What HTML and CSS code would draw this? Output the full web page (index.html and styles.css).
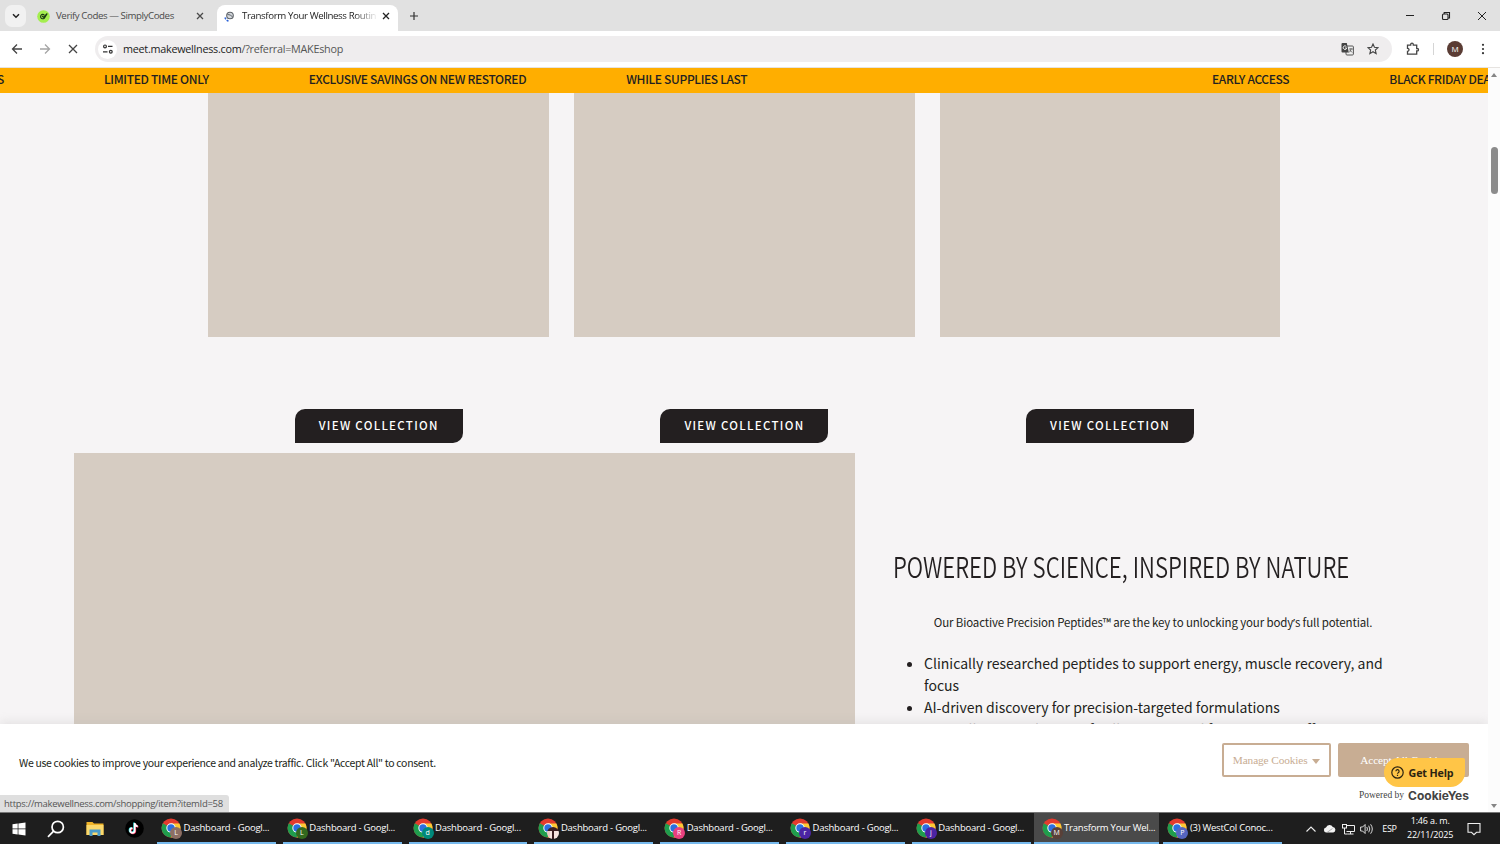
FILE: index.html
```
<!DOCTYPE html>
<html lang="en">
<head>
    <meta charset="UTF-8">
    <meta name="viewport" content="width=device-width, initial-scale=1.0">
    <title>Transform Your Wellness Routine</title>
    <link rel="stylesheet" href="styles.css">
</head>
<body>
    <svg class="defs" width="0" height="0">
        <symbol id="chrome" viewBox="0 0 20 20">
            <circle cx="10" cy="10" r="9.5" fill="#e33b2e"/>
            <path d="M10 10 1.8 5.2A9.5 9.5 0 0 0 9.5 19.5L14 12.5Z" fill="#1f9d4d"/>
            <path d="M10 5.6H18.4A9.5 9.5 0 0 1 9.5 19.5L14 12.3Z" fill="#fcc934"/>
            <circle cx="10" cy="10" r="4.7" fill="#fff"/>
            <circle cx="10" cy="10" r="3.7" fill="#2b6fe0"/>
        </symbol>
        <symbol id="close" viewBox="0 0 8 8">
            <path d="M1 1l6 6M7 1l-6 6" fill="none" stroke="currentColor" stroke-width="1.3"/>
        </symbol>
    </svg>

    <div class="tab-strip">
        <button class="tab-search">
            <svg width="8" height="6" viewBox="0 0 8 6"><path d="M1 1.2l3 3 3-3" fill="none" stroke="#222" stroke-width="1.5"/></svg>
        </button>
        <div class="tab">
            <svg class="favicon" width="13" height="13" viewBox="0 0 13 13">
                <circle cx="6.5" cy="6.5" r="6.3" fill="#a4ee4f"/>
                <path d="M7.3 5A2.2 2.2 0 1 0 7.8 7.5L10.3 3.5M5 6l1.5 1.2L10.3 3.5" fill="none" stroke="#1d3a14" stroke-width="1.1"/>
            </svg>
            <span class="tab-title">Verify Codes — SimplyCodes</span>
            <svg class="tab-close" width="8" height="8"><use href="#close"/></svg>
        </div>
        <div class="tab active">
            <svg class="favicon" width="11" height="11" viewBox="0 0 11 11">
                <circle cx="6" cy="4.5" r="3.3" fill="#d5d9de" stroke="#5e6368" stroke-width="1.1"/>
                <path d="M3.5 3.5l3 .5 2 2" fill="none" stroke="#5e6368" stroke-width="1"/>
                <path d="M1 6.5a5 5 0 0 0 3.5 3.5" fill="none" stroke="#2a62d9" stroke-width="1.5" stroke-dasharray="2 1"/>
            </svg>
            <span class="tab-title">Transform Your Wellness Routin</span>
            <svg class="tab-close" width="8" height="8"><use href="#close"/></svg>
        </div>
        <svg class="new-tab" width="10" height="10" viewBox="0 0 10 10"><path d="M5 1v8M1 5h8" stroke="#333" stroke-width="1.2"/></svg>
        <div class="window-buttons">
            <svg width="10" height="10" viewBox="0 0 10 10"><path d="M1 4.500h8" stroke="#222"/></svg>
            <svg width="10" height="10" viewBox="0 0 10 10" fill="none" stroke="#222" stroke-width="1.1"><rect x="1.5" y="3" width="5.5" height="5.5" rx="1"/><path d="M3.2 3V1.5h5.3V7H7"/></svg>
            <svg width="10" height="10" viewBox="0 0 10 10"><path d="M1 1l8 8M9 1l-8 8" stroke="#222"/></svg>
        </div>
    </div>

    <div class="toolbar">
        <svg width="12" height="12" viewBox="0 0 12 12" fill="none" stroke="#444" stroke-width="1.3"><path d="M11 6H1.8M6 1.5L1.5 6 6 10.5"/></svg>
        <svg width="12" height="12" viewBox="0 0 12 12" fill="none" stroke="#a5a5a5" stroke-width="1.3"><path d="M1 6h9.2M6 1.5L10.5 6 6 10.5"/></svg>
        <svg width="12" height="12" viewBox="0 0 12 12" fill="none" stroke="#444" stroke-width="1.3"><path d="M2 2l8 8M10 2l-8 8"/></svg>
        <div class="address-bar">
            <span class="site-info">
                <svg width="12" height="12" viewBox="0 0 12 12" fill="none" stroke="#333" stroke-width="1.2"><circle cx="3" cy="3.4" r="1.4"/><path d="M6 3.4h4.5M1 8.8h4.5"/><circle cx="8.8" cy="8.8" r="1.4"/></svg>
            </span>
            <span class="url">meet.makewellness.com<span class="url-path">/?referral=MAKEshop</span></span>
            <svg class="translate" width="13" height="13" viewBox="0 0 13 13">
                <rect x="5" y="3" width="7.4" height="9" rx="1" fill="#eee" stroke="#555"/>
                <path d="M1.5 0h4.3l2 9.5H1.5Q.5 9.5.5 8.5V1Q.5 0 1.5 0Z" fill="#444"/>
                <path d="M5.4 3.6A1.8 1.8 0 1 0 5.7 5H4" fill="none" stroke="#fff" stroke-width=".9"/>
                <path d="M8 6h4M10 5v1q0 2-2 3.5M8.7 7l2.5 2.5" fill="none" stroke="#555" stroke-width=".8"/>
            </svg>
            <svg width="12" height="12" viewBox="0 0 12 12"><path d="M6 1l1.45 3.3 3.6.35-2.7 2.4.8 3.55L6 8.7 2.85 10.6l.8-3.55-2.7-2.4 3.6-.35Z" fill="none" stroke="#444" stroke-width="1.1"/></svg>
        </div>
        <svg class="puzzle" width="14" height="14" viewBox="0 0 14 14"><path d="M1.5 3.2h3.2V2.5a1.3 1.3 0 0 1 2.6 0v.7h3.4v3.3h.6a1.2 1.2 0 0 1 0 2.4h-.6v3.3H1.500V9.3a1.5 1.5 0 0 0 0-3Z" fill="none" stroke="#444" stroke-width="1.3"/></svg>
        <span class="separator"></span>
        <span class="avatar">M</span>
        <svg class="menu" width="4" height="12" viewBox="0 0 4 12" fill="#333"><circle cx="2" cy="1.8" r="1.1"/><circle cx="2" cy="6" r="1.1"/><circle cx="2" cy="10.2" r="1.1"/></svg>
    </div>

    <div class="viewport">
        <div class="page">
            <div class="marquee">
                <div class="marquee-track">
                    <span>BLACK FRIDAY DEALS</span>
                    <span>LIMITED TIME ONLY</span>
                    <span>EXCLUSIVE SAVINGS ON NEW RESTORED</span>
                    <span>WHILE SUPPLIES LAST</span>
                </div>
                <div class="marquee-track">
                    <span>EARLY ACCESS</span>
                    <span>BLACK FRIDAY DEALS</span>
                </div>
            </div>

            <div class="collections">
                <div class="collection">
                    <div class="collection-image"></div>
                    <a class="view-button">VIEW COLLECTION</a>
                </div>
                <div class="collection">
                    <div class="collection-image"></div>
                    <a class="view-button">VIEW COLLECTION</a>
                </div>
                <div class="collection">
                    <div class="collection-image"></div>
                    <a class="view-button">VIEW COLLECTION</a>
                </div>
            </div>

            <div class="science">
                <div class="science-image"></div>
                <div class="science-text">
                    <h2>POWERED BY SCIENCE, INSPIRED BY NATURE</h2>
                    <p>Our Bioactive Precision Peptides™ are the key to unlocking your body<span class="quote">’</span>s full potential.</p>
                    <ul>
                        <li>Clinically researched peptides to support energy, muscle recovery, and focus</li>
                        <li>AI-driven discovery for precision-targeted formulations</li>
                        <li>Naturally sourced, scientifically engineered for maximum effectiveness</li>
                    </ul>
                </div>
            </div>

            <div class="cookie-bar">
                <p>We use cookies to improve your experience and analyze traffic. Click "Accept All" to consent.</p>
                <div class="cookie-actions">
                    <div class="cookie-buttons">
                        <button class="manage">Manage Cookies <span class="caret"></span></button>
                        <button class="accept">Accept All Cookies</button>
                    </div>
                    <div class="powered">Powered by <b>CookieYes</b></div>
                </div>
            </div>

            <button class="get-help">
                <svg width="13" height="13" viewBox="0 0 13 13" fill="none" stroke="#2c2310" stroke-width="1.2"><circle cx="6.5" cy="6.5" r="5.7"/><path d="M4.9 5.2a1.6 1.6 0 1 1 2.3 1.5q-.7.3-.7 1.1M6.5 8.8v1.2"/></svg>
                Get Help
            </button>
        </div>
        <div class="scrollbar">
            <span class="arrow-up"></span>
            <span class="thumb"></span>
            <span class="arrow-down"></span>
        </div>
        <div class="status-bubble">https://makewellness.com/shopping/item?itemId=58</div>
    </div>

    <div class="taskbar">
        <div class="launchers">
            <svg width="14" height="14" viewBox="0 0 14 14" fill="#fff"><path d="M.5 2.2l5.2-.7v5.1H.5ZM6.4 1.4L13.5.4v6.2H6.4ZM.5 7.3h5.2v5.1l-5.2-.7ZM6.4 7.3h7.1v6.2l-7.1-1Z"/></svg>
            <svg width="18" height="18" viewBox="0 0 18 18" fill="none" stroke="#fff" stroke-width="1.7"><circle cx="10.7" cy="7" r="5.7"/><path d="M6.6 11.2L1 16.8"/></svg>
            <svg width="18" height="16" viewBox="0 0 18 16"><path d="M.5 1h6l1.5 1.5H17.5V14H.5Z" fill="#f0b429"/><path d="M.5 4h17v10H.5Z" fill="#fbd96c"/><path d="M3.5 15V8.500h11V15h-3v-3.5h-5V15Z" fill="#4a9bc9"/></svg>
            <svg width="19" height="19" viewBox="0 0 19 19"><circle cx="9.500" cy="9.500" r="9.3" fill="#000"/><g fill="none" stroke-width="1.7"><path d="M9.700 4v7.5a2.3 2.3 0 1 1-2.3-2.3M9.700 4.300q.4 2.7 3 3" stroke="#2fe0de" transform="translate(-.6 -.4)"/><path d="M9.700 4v7.5a2.3 2.3 0 1 1-2.3-2.3M9.700 4.300q.4 2.700 3 3" stroke="#f0325b" transform="translate(.6 .5)"/><path d="M9.700 4v7.5a2.3 2.3 0 1 1-2.3-2.3M9.700 4.300q.4 2.700 3 3" stroke="#fff"/></g></svg>
        </div>
        <div class="tasks">
            <div class="task"><span class="app"><svg><use href="#chrome"/></svg><i class="badge brown">L</i></span><span class="task-name">Dashboard - Googl...</span></div>
            <div class="task"><span class="app"><svg><use href="#chrome"/></svg><i class="badge green">L</i></span><span class="task-name">Dashboard - Googl...</span></div>
            <div class="task"><span class="app"><svg><use href="#chrome"/></svg><i class="badge teal">d</i></span><span class="task-name">Dashboard - Googl...</span></div>
            <div class="task"><span class="app"><svg><use href="#chrome"/></svg><i class="badge photo"></i></span><span class="task-name">Dashboard - Googl...</span></div>
            <div class="task"><span class="app"><svg><use href="#chrome"/></svg><i class="badge pink">R</i></span><span class="task-name">Dashboard - Googl...</span></div>
            <div class="task"><span class="app"><svg><use href="#chrome"/></svg><i class="badge purple">r</i></span><span class="task-name">Dashboard - Googl...</span></div>
            <div class="task"><span class="app"><svg><use href="#chrome"/></svg><i class="badge purple">j</i></span><span class="task-name">Dashboard - Googl...</span></div>
            <div class="task current"><span class="app"><svg><use href="#chrome"/></svg><i class="badge coffee">M</i></span><span class="task-name">Transform Your Wel...</span></div>
            <div class="task"><span class="app"><svg><use href="#chrome"/></svg><i class="badge indigo">P</i></span><span class="task-name">(3) WestCol Conoc...</span></div>
        </div>
        <div class="tray">
            <svg width="10" height="6" viewBox="0 0 10 6"><path d="M.5 5.5L5 1l4.5 4.5" fill="none" stroke="#eee" stroke-width="1.1"/></svg>
            <svg class="cloud" width="13" height="9" viewBox="0 0 13 9"><path d="M3 8.5a2.6 2.6 0 0 1 0-5.1A3.7 3.7 0 0 1 9.8 3 2.8 2.8 0 0 1 10.3 8.5Z" fill="#f2f2f2"/><path d="M4 8.5L9.5 4.5" stroke="#999" stroke-width=".8"/></svg>
            <svg class="network" width="13" height="12" viewBox="0 0 13 12" fill="none" stroke="#eee"><path d="M4.5 2.5h8v6h-8M8.5 8.5v2.5M5.5 11h6M2.5 5v6h3"/><rect x=".5" y="1.5" width="4" height="3.5"/></svg>
            <svg class="volume" width="13" height="12" viewBox="0 0 13 12" fill="none" stroke="#eee" stroke-width=".9"><path d="M.6 4h2l2.5-2.5v9L2.6 8h-2ZM6.800 4q1.3 2 0 4M8.7 2.7q2.2 3.3 0 6.6M10.6 1.3q3.4 4.7 0 9.4"/></svg>
            <span class="lang">ESP</span>
            <span class="clock">1:46 a. m.<br>22/11/2025</span>
            <svg class="notes" width="14" height="14" viewBox="0 0 14 14"><path d="M1 1.5h12v8.8H9.5L7 12.7 4.500 10.3H1Z" fill="none" stroke="#eee" stroke-width="1.1"/></svg>
        </div>
    </div>
</body>
</html>
```
FILE: styles.css
```
* {
    box-sizing: border-box;
}
body {
    margin: 0;
    width: 1500px;
    height: 844px;
    overflow: hidden;
    display: flex;
    flex-direction: column;
    font-family: "Open Sans", "Noto Sans", sans-serif;
    font-size: 10px;
    color: #222;
    background-color: #fff;
}
svg {
    display: block;
    flex-shrink: 0;
}
.defs {
    position: absolute;
}
button {
    border: none;
    padding: 0;
    font: inherit;
}

/* Browser tabs */
.tab-strip {
    height: 31px;
    flex-shrink: 0;
    display: flex;
    align-items: center;
    background-color: #e1e1e1;
    padding-left: 5px;
}
.tab-search {
    width: 21px;
    height: 22px;
    border-radius: 7px;
    background-color: #f1f1f1;
    display: flex;
    align-items: center;
    justify-content: center;
}
.tab {
    width: 191px;
    height: 26px;
    margin-top: 5px;
    padding: 0 13px 4px 11px;
    display: flex;
    align-items: center;
    color: #4a4a4a;
}
.tab.active {
    width: 181px;
    padding: 0 8px 4px 7px;
    background-color: #fff;
    border-radius: 8px 8px 0 0;
    color: #222;
}
.tab-title {
    flex: 1;
    margin-left: 6px;
    white-space: nowrap;
    font-size: 9.7px;
    letter-spacing: -0.42px;
    line-height: 16px;
}
.active .tab-title {
    min-width: 0;
    margin-left: 7px;
    letter-spacing: -0.38px;
    -webkit-mask-image: linear-gradient(to right, #000 112px, transparent 136px);
    mask-image: linear-gradient(to right, #000 112px, transparent 136px);
}
.new-tab {
    margin-left: 11px;
}
.window-buttons {
    margin-left: auto;
    display: flex;
    gap: 26px;
    padding-right: 13px;
}

/* Address bar */
.toolbar {
    height: 37px;
    flex-shrink: 0;
    display: flex;
    align-items: center;
    padding: 0 15px 0 11px;
    gap: 16px;
    background-color: #fff;
    border-bottom: 1px solid #e6e3e0;
}
.address-bar {
    width: 1297px;
    height: 26px;
    border-radius: 13px;
    background-color: #efedee;
    display: flex;
    align-items: center;
    padding: 0 13px 0 3px;
}
.site-info {
    width: 19px;
    height: 19px;
    border-radius: 50%;
    background-color: #fff;
    display: flex;
    align-items: center;
    justify-content: center;
}
.url {
    margin-left: 6px;
    font-size: 10.8px;
    letter-spacing: -0.26px;
    line-height: 16px;
}
.url-path {
    color: #555;
}
.translate {
    margin: 0 13px 0 auto;
}
.puzzle {
    margin-left: -2px;
}
.separator {
    width: 1px;
    height: 12px;
    margin-left: -3px;
    background-color: #d5d5d5;
}
.avatar {
    width: 16px;
    height: 16px;
    margin-left: -3px;
    border-radius: 50%;
    background-color: #5a3c34;
    color: #fff;
    font-size: 8px;
    line-height: 16px;
    text-align: center;
}
.menu {
    margin-left: 2px;
}

/* Page area */
.viewport {
    height: 744px;
    flex-shrink: 0;
    display: flex;
    position: relative;
}
.page {
    width: 1488px;
    position: relative;
    overflow: hidden;
    background-color: #f6f4f5;
    font-family: "Noto Sans CJK SC", "Noto Sans", sans-serif;
    color: #231f20;
}
.marquee {
    height: 25px;
    overflow: hidden;
    display: flex;
    background-color: #ffae00;
    font-size: 12px;
    font-weight: 500;
    letter-spacing: -0.35px;
    line-height: 22px;
    white-space: nowrap;
}
.marquee-track {
    width: 1212px;
    flex-shrink: 0;
    display: flex;
    gap: 100px;
}
.marquee-track:first-child span:first-child {
    width: 4px;
    direction: rtl;
}
.collections {
    width: 1072px;
    margin: 0 0 0 208.4px;
    display: grid;
    grid-template-columns: repeat(3, 1fr);
    gap: 25px;
}
.collection {
    display: flex;
    flex-direction: column;
    align-items: center;
}
.collection-image {
    width: 100%;
    height: 244.4px;
    margin-bottom: 71.6px;
    background-color: #d6ccc2;
}
.view-button {
    width: 168px;
    height: 34px;
    border-radius: 10px 0;
    background-color: #231f20;
    color: #fff;
    font-size: 11.5px;
    font-weight: 500;
    letter-spacing: 1.3px;
    line-height: 32px;
    text-align: center;
}
.science {
    display: flex;
    margin: 10px 0 0 74px;
}
.science-image {
    width: 781px;
    height: 520px;
    flex-shrink: 0;
    background-color: #d6ccc2;
}
.science-text {
    width: 520px;
    margin-left: 38px;
    padding-top: 91px;
}
h2 {
    width: max-content;
    margin: 0;
    font-size: 28px;
    font-weight: 350;
    line-height: 44px;
    white-space: nowrap;
    transform: scaleX(0.79);
    transform-origin: left;
}
.science-text p {
    margin: 24px 0 0;
    font-size: 11.5px;
    letter-spacing: -0.14px;
    line-height: 20px;
    text-align: center;
}
.quote {
    font-family: "Noto Sans", sans-serif;
}
.science-text ul {
    width: 500px;
    margin: 20px 0 0;
    padding-left: 31px;
    font-size: 14px;
    line-height: 21.8px;
}
.science-text li:last-child {
    padding-top: 1px;
}

/* Cookie consent */
.cookie-bar {
    position: absolute;
    left: 0;
    right: 0;
    bottom: 0;
    height: 88px;
    padding: 19px 19px 0;
    display: flex;
    justify-content: space-between;
    background-color: #fff;
    box-shadow: 0 -1px 10px rgba(172, 171, 171, 0.3);
}
.cookie-bar p {
    margin: 10px 0 0;
    font-size: 10.5px;
    letter-spacing: -0.32px;
    line-height: 20px;
}
.cookie-actions {
    font-family: "Liberation Serif", serif;
}
.cookie-buttons {
    display: flex;
    gap: 7px;
}
.cookie-buttons button {
    height: 34px;
    padding-bottom: 1px;
    border: 2px solid #c8ad93;
    border-radius: 2px;
    font-size: 11.3px;
    letter-spacing: -0.1px;
}
.manage {
    width: 109px;
    background-color: #fff;
    color: #c8ad93;
}
.caret {
    display: inline-block;
    border: 4px solid transparent;
    border-top: 5px solid #c8ad93;
    border-bottom: 0;
    margin-left: 2px;
}
.accept {
    width: 131px;
    background-color: #c8ad93;
    color: #fff;
}
.powered {
    display: flex;
    justify-content: flex-end;
    align-items: center;
    gap: 4px;
    height: 16px;
    margin-top: 10px;
    font-size: 9.5px;
    color: #444;
}
.powered b {
    font-family: Inter, sans-serif;
    font-size: 12px;
}
.get-help {
    position: absolute;
    left: 1384px;
    top: 690px;
    width: 81px;
    height: 29px;
    padding-right: 5px;
    border-radius: 15px 2px 15px 15px;
    background-color: #ffc547;
    color: #2c2310;
    font-family: "Open Sans", sans-serif;
    font-size: 10.7px;
    font-weight: 700;
    letter-spacing: -0.15px;
    display: flex;
    align-items: center;
    justify-content: center;
    gap: 5px;
}

/* Scrollbar */
.scrollbar {
    width: 12px;
    display: flex;
    flex-direction: column;
    align-items: center;
    padding: 5px 0 4px;
    background-color: #fcfcfc;
}
.arrow-up {
    border: 3.5px solid transparent;
    border-bottom: 4px solid #858585;
    border-top: 0;
}
.thumb {
    width: 7px;
    height: 47px;
    margin-top: 70px;
    border-radius: 4px;
    background-color: #8b8b8b;
}
.arrow-down {
    margin-top: auto;
    border: 3.5px solid transparent;
    border-top: 4px solid #858585;
    border-bottom: 0;
}
.status-bubble {
    position: absolute;
    left: 0;
    bottom: 0;
    width: 229px;
    height: 17px;
    padding-left: 4px;
    border-radius: 0 3px 0 0;
    background-color: #dfdfdf;
    color: #555;
    font-size: 9.5px;
    letter-spacing: -0.29px;
    line-height: 18px;
    white-space: nowrap;
}

/* Windows taskbar */
.taskbar {
    height: 32px;
    flex-shrink: 0;
    display: flex;
    background-color: #1e1e1e;
    border-top: 1px solid #777;
    color: #fff;
}
.launchers {
    width: 157px;
    flex-shrink: 0;
    display: flex;
    align-items: center;
    gap: 21px;
    padding-left: 12px;
}
.tasks {
    display: flex;
    gap: 7px;
}
.task {
    width: 118.8px;
    display: flex;
    align-items: center;
    gap: 2.5px;
    padding-left: 4px;
    border-bottom: 2px solid #76b9ed;
}
.task.current {
    width: 125px;
    margin: 0 -2.5px 0 -3.7px;
    padding-left: 7.7px;
    background-color: #4a4a4a;
}
.app {
    width: 20px;
    height: 20px;
    flex-shrink: 0;
    position: relative;
}
.app svg {
    width: 20px;
    height: 20px;
}
.badge {
    position: absolute;
    left: 9px;
    top: 9px;
    width: 12px;
    height: 12px;
    border-radius: 50%;
    font-size: 7px;
    font-style: normal;
    line-height: 12px;
    text-align: center;
}
.brown { background-color: #8d6e63; }
.green { background-color: #33691e; }
.teal { background-color: #00897b; }
.pink { background-color: #e8407f; }
.purple { background-color: #4b24a3; }
.coffee { background-color: #5a4038; }
.indigo { background-color: #5566c0; }
.photo { background: linear-gradient(#3b1f22 35%, transparent 35%), linear-gradient(to right, #e9c9c4 25%, #f6e4e0 25%, #f6e4e0 42%, #3b1f22 42%, #3b1f22 58%, #f6e4e0 58%); }
.task-name {
    white-space: nowrap;
    font-size: 9.5px;
    letter-spacing: -0.23px;
}
.tray {
    display: flex;
    align-items: center;
    margin-left: 24px;
    font-size: 9px;
}
.cloud {
    margin-left: 7px;
}
.network {
    margin-left: 6px;
}
.volume {
    margin-left: 5px;
}
.lang {
    width: 15px;
    margin-left: 9px;
    letter-spacing: -0.3px;
}
.clock {
    width: 48px;
    margin: -2px 0 0 9px;
    text-align: center;
    letter-spacing: -0.15px;
    line-height: 14px;
}
.notes {
    margin-left: 13px;
}
```
